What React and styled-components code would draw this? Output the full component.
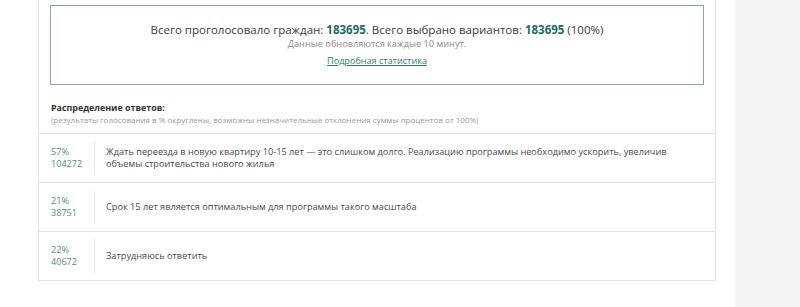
import React from "react";
import styled, { createGlobalStyle } from "styled-components";

const GlobalStyle = createGlobalStyle`
  html, body {
    margin: 0;
    padding: 0;
    background: #fff;
    font-family: "Open Sans", "Liberation Sans", sans-serif;
  }
`;

const answers = [
  {
    percent: 57,
    votes: 104272,
    text: "Ждать переезда в новую квартиру 10-15 лет — это слишком долго. Реализацию программы необходимо ускорить, увеличив объемы строительства нового жилья",
  },
  {
    percent: 21,
    votes: 38751,
    text: "Срок 15 лет является оптимальным для программы такого масштаба",
  },
  { percent: 22, votes: 40672, text: "Затрудняюсь ответить" },
];

function App() {
  return (
    <Page>
      <GlobalStyle />
      <Main>
        <Card>
          <Summary>
            <Totals>
              Всего проголосовало граждан: <b>183695</b>. Всего выбрано вариантов:{" "}
              <b>183695</b> (100%)
            </Totals>
            <Note>Данные обновляются каждые 10 минут.</Note>
            <StatsLink href="#">Подробная статистика</StatsLink>
          </Summary>

          <Heading>
            <h4>Распределение ответов:</h4>
            <p>
              (результаты голосования в % округлены, возможны незначительные отклонения суммы
              процентов от 100%)
            </p>
          </Heading>

          <AnswerList>
            {answers.map((a) => (
              <AnswerRow key={a.votes}>
                <Count>
                  {a.percent}%
                  <br />
                  {a.votes}
                </Count>
                <AnswerText>{a.text}</AnswerText>
              </AnswerRow>
            ))}
          </AnswerList>
        </Card>
      </Main>
      <Sidebar />
    </Page>
  );
}

const Page = styled.div`
  display: flex;
  height: 307px;
`;

const Main = styled.div`
  width: 735px;
  padding-left: 38px;
  box-sizing: border-box;
`;

const Card = styled.div`
  width: 678px;
  box-sizing: border-box;
  border: 1px solid #e3e3e3;
  border-top: none;
  padding-top: 5px;
`;

const Sidebar = styled.div`
  flex: 1;
  background: #f4f4f4;
`;

const Summary = styled.div`
  margin: 0 11px;
  height: 80px;
  box-sizing: border-box;
  border: 1px solid #7ea7a3;
  display: flex;
  flex-direction: column;
  align-items: center;
  padding-top: 16px;
`;

const Totals = styled.div`
  font-size: 11.5px;
  line-height: 16px;
  color: #3a3a3a;
  b {
    color: #1d6b66;
    font-weight: 700;
  }
`;

const Note = styled.div`
  font-size: 9.2px;
  line-height: 12px;
  color: #8c8c8c;
`;

const StatsLink = styled.a`
  margin-top: 5px;
  font-size: 9.1px;
  line-height: 12px;
  color: #2e7a75;
  text-decoration: underline;
`;

const Heading = styled.div`
  padding: 17px 12px 8px;
  h4 {
    margin: 0;
    font-size: 8.9px;
    line-height: 12px;
    font-weight: 700;
    color: #333;
  }
  p {
    margin: 0;
    font-size: 8px;
    line-height: 11px;
    color: #999;
  }
`;

const AnswerList = styled.div`
  display: flex;
  flex-direction: column;
`;

const AnswerRow = styled.div`
  display: flex;
  align-items: center;
  height: 49px;
  box-sizing: border-box;
  padding: 7px 0;
  border-top: 1px solid #e3e3e3;
`;

const Count = styled.div`
  flex: 0 0 43px;
  padding-left: 12px;
  align-self: stretch;
  display: flex;
  flex-direction: column;
  justify-content: center;
  border-right: 1px solid #e8e8e8;
  font-size: 9.1px;
  line-height: 12px;
  color: #5b8a86;
`;

const AnswerText = styled.div`
  padding: 0 40px 0 11px;
  font-size: 9.2px;
  line-height: 12px;
  color: #4a4a4a;
`;

export default App;
